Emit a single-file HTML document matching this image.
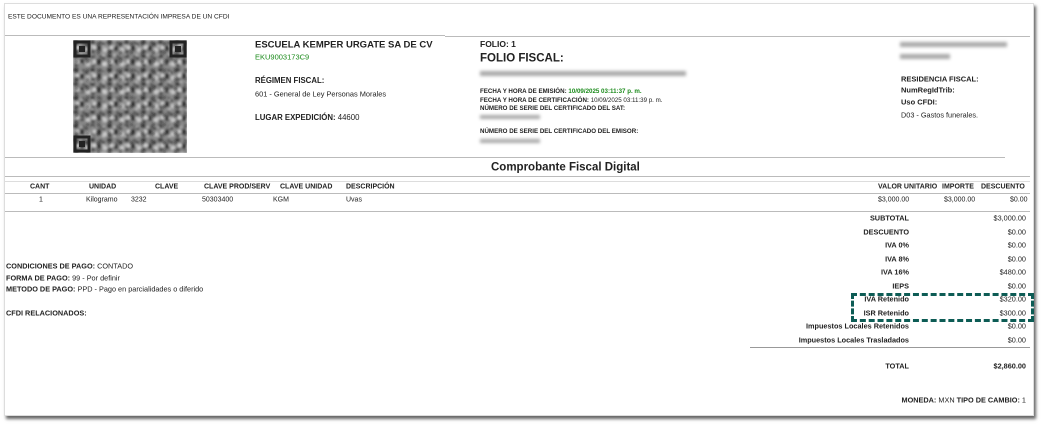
<!DOCTYPE html>
<html><head><meta charset="utf-8"><style>
*{margin:0;padding:0;box-sizing:border-box}
body{width:1046px;height:425px;background:#fff;position:relative;overflow:hidden;font-family:"Liberation Sans",Arial,sans-serif;color:#222}
.pg{position:absolute;left:4px;top:3px;width:1030px;height:413px;background:#fff;border:1px solid #ddd;box-shadow:2px 3px 3px #666}
.t{position:absolute;white-space:nowrap;line-height:1;transform:translateY(-50%)}
.s{font-size:7px}
.b{font-weight:bold}
.h{font-size:7px;font-weight:bold}
.l{position:absolute;height:1px;background:#bbb}
.r{text-align:right}
.g{color:#1a8a1a}
.blur{position:absolute;background:#aaa;filter:blur(1.5px);height:5px}
</style></head><body>
<div class="pg"></div>
<div class="t" style="left:8px;top:18px;font-size:6.6px">ESTE DOCUMENTO ES UNA REPRESENTACIÓN IMPRESA DE UN CFDI</div>
<div class="l" style="left:5px;top:35px;width:440px"></div>
<div class="l" style="left:445px;top:36px;width:585px"></div>

<svg style="position:absolute;left:73px;top:40px" width="114" height="113" viewBox="0 0 114 113">
<defs><filter id="f"><feGaussianBlur stdDeviation="1.2"/></filter>
<pattern id="p" width="17" height="14" patternUnits="userSpaceOnUse"><rect width="17" height="14" fill="#8a8a8a"/><rect x="0" y="0" width="5" height="4" fill="#333"/><rect x="7" y="5" width="4" height="6" fill="#222"/><rect x="3" y="6" width="3" height="3" fill="#ddd"/><rect x="9" y="1" width="3" height="3" fill="#444"/><rect x="13" y="8" width="4" height="4" fill="#ccc"/><rect x="12" y="3" width="3" height="3" fill="#2a2a2a"/><rect x="1" y="10" width="4" height="3" fill="#3a3a3a"/></pattern>
<pattern id="q" width="11" height="9" patternUnits="userSpaceOnUse"><rect width="11" height="9" fill="none"/><rect x="2" y="2" width="3" height="3" fill="#222" opacity=".6"/><rect x="7" y="5" width="3" height="2" fill="#eee" opacity=".6"/></pattern></defs>
<rect width="114" height="113" fill="url(#p)" filter="url(#f)"/>
<rect width="114" height="113" fill="url(#q)" filter="url(#f)"/>
<g fill="none" stroke="#222" stroke-width="3"><rect x="2" y="2" width="14" height="14"/><rect x="98" y="2" width="14" height="14"/><rect x="2" y="97" width="14" height="14"/></g>
<g fill="#222"><rect x="6" y="6" width="6" height="6"/><rect x="102" y="6" width="6" height="6"/><rect x="6" y="101" width="6" height="6"/></g>
</svg>

<div class="t b" style="left:255px;top:45px;font-size:9.5px">ESCUELA KEMPER URGATE SA DE CV</div>
<div class="t g" style="left:255px;top:57px;font-size:7.5px">EKU9003173C9</div>
<div class="t b" style="left:255px;top:81px;font-size:7.8px">RÉGIMEN FISCAL:</div>
<div class="t s" style="left:255px;top:94px;font-size:7.4px">601 - General de Ley Personas Morales</div>
<div class="t" style="left:255px;top:118px;font-size:7.8px"><b>LUGAR EXPEDICIÓN:</b> 44600</div>

<div class="t b" style="left:480px;top:44px;font-size:8.5px">FOLIO: 1</div>
<div class="t b" style="left:480px;top:59px;font-size:11.5px">FOLIO FISCAL:</div>
<div class="blur" style="left:480px;top:71px;width:206px"></div>
<div class="t" style="left:480px;top:92px;font-size:6.2px"><b>FECHA Y HORA DE EMISIÓN:</b> <span class="g b">10/09/2025 03:11:37 p. m.</span></div>
<div class="t" style="left:480px;top:101px;font-size:6.2px"><b>FECHA Y HORA DE CERTIFICACIÓN:</b> 10/09/2025 03:11:39 p. m.</div>
<div class="t b" style="left:480px;top:109px;font-size:6.2px">NÚMERO DE SERIE DEL CERTIFICADO DEL SAT:</div>
<div class="blur" style="left:480px;top:115px;width:60px;height:4px"></div>
<div class="t b" style="left:480px;top:132px;font-size:6.2px">NÚMERO DE SERIE DEL CERTIFICADO DEL EMISOR:</div>
<div class="blur" style="left:480px;top:139px;width:60px;height:4px"></div>

<div class="blur" style="left:900px;top:42px;width:107px"></div>
<div class="blur" style="left:900px;top:54px;width:50px"></div>
<div class="t b" style="left:901px;top:79px;font-size:7.5px">RESIDENCIA FISCAL:</div>
<div class="t b" style="left:901px;top:90px;font-size:7.5px">NumRegIdTrib:</div>
<div class="t b" style="left:901px;top:102px;font-size:7.5px">Uso CFDI:</div>
<div class="t" style="left:901px;top:115px;font-size:7.3px">D03 - Gastos funerales.</div>

<div class="l" style="left:5px;top:157px;width:1000px"></div>
<div class="t b" style="left:491px;top:168px;font-size:11.5px">Comprobante Fiscal Digital</div>
<div class="l" style="left:5px;top:176px;width:1025px"></div>
<div class="l" style="left:5px;top:181px;width:1025px;background:#ddd"></div>

<div class="t h" style="left:30px;top:187px">CANT</div>
<div class="t h" style="left:89px;top:187px">UNIDAD</div>
<div class="t h" style="left:155px;top:187px">CLAVE</div>
<div class="t h" style="left:204px;top:187px">CLAVE PROD/SERV</div>
<div class="t h" style="left:280px;top:187px">CLAVE UNIDAD</div>
<div class="t h" style="left:346px;top:187px">DESCRIPCIÓN</div>
<div class="t h" style="left:878px;top:187px">VALOR UNITARIO</div>
<div class="t h" style="left:942px;top:187px">IMPORTE</div>
<div class="t h" style="left:981px;top:187px">DESCUENTO</div>
<div class="l" style="left:5px;top:193px;width:1025px"></div>
<div class="t s" style="left:39px;top:200px">1</div>
<div class="t s" style="left:86px;top:200px">Kilogramo</div>
<div class="t s" style="left:131px;top:200px">3232</div>
<div class="t s" style="left:202px;top:200px">50303400</div>
<div class="t s" style="left:273px;top:200px">KGM</div>
<div class="t s" style="left:346px;top:200px">Uvas</div>
<div class="t s" style="left:878px;top:200px">$3,000.00</div>
<div class="t s" style="left:944px;top:200px">$3,000.00</div>
<div class="t s" style="left:1010px;top:200px">$0.00</div>
<div class="l" style="left:5px;top:211px;width:1025px"></div>

<div class="t" style="left:6px;top:266px;font-size:7.3px"><b>CONDICIONES DE PAGO:</b> CONTADO</div>
<div class="t" style="left:6px;top:278px;font-size:7.3px"><b>FORMA DE PAGO:</b> 99 - Por definir</div>
<div class="t" style="left:6px;top:289px;font-size:7.3px"><b>METODO DE PAGO:</b> PPD - Pago en parcialidades o diferido</div>
<div class="t b" style="left:6px;top:313px;font-size:7.3px">CFDI RELACIONADOS:</div>

<div style="position:absolute;left:740px;top:211px;width:286px;font-size:7.3px">
<div style="position:relative;height:200px">
<div class="t b r" style="right:117px;top:7px">SUBTOTAL</div><div class="t r" style="right:0;top:7px">$3,000.00</div>
<div class="t b r" style="right:117px;top:21px">DESCUENTO</div><div class="t r" style="right:0;top:21px">$0.00</div>
<div class="t b r" style="right:117px;top:34px">IVA 0%</div><div class="t r" style="right:0;top:34px">$0.00</div>
<div class="t b r" style="right:117px;top:48px">IVA 8%</div><div class="t r" style="right:0;top:48px">$0.00</div>
<div class="t b r" style="right:117px;top:61px">IVA 16%</div><div class="t r" style="right:0;top:61px">$480.00</div>
<div class="t b r" style="right:117px;top:75px">IEPS</div><div class="t r" style="right:0;top:75px">$0.00</div>
<div class="t b r" style="right:117px;top:88px">IVA Retenido</div><div class="t r" style="right:0;top:88px">$320.00</div>
<div class="t b r" style="right:117px;top:102px">ISR Retenido</div><div class="t r" style="right:0;top:102px">$300.00</div>
<div class="t b r" style="right:117px;top:115px">Impuestos Locales Retenidos</div><div class="t r" style="right:0;top:115px">$0.00</div>
<div class="t b r" style="right:117px;top:129px">Impuestos Locales Trasladados</div><div class="t r" style="right:0;top:129px">$0.00</div>
<div class="t b r" style="right:117px;top:155px">TOTAL</div><div class="t b r" style="right:0;top:155px">$2,860.00</div>
<div class="t r" style="right:0;top:189px"><b>MONEDA:</b> MXN <b>TIPO DE CAMBIO:</b> 1</div>
</div></div>
<div class="l" style="left:750px;top:347px;width:280px;background:#999"></div>
<div style="position:absolute;left:851px;top:293px;width:183px;height:29px;border:3px dashed #0d5c55"></div>
</body></html>
